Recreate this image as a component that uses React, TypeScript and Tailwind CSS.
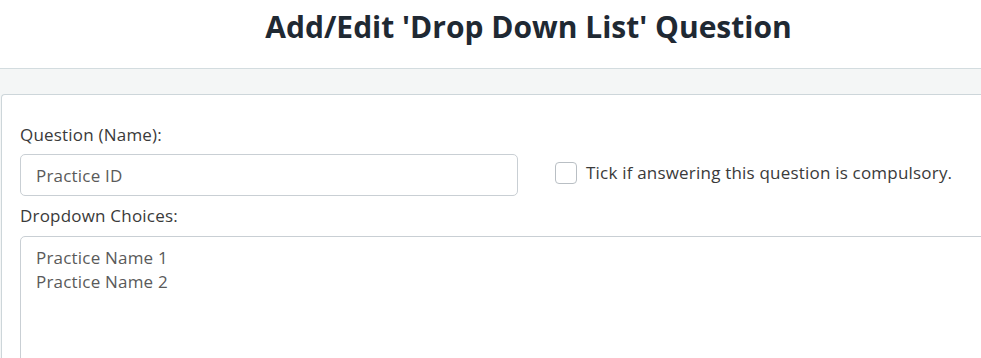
export default function App() {
  return (
    <div className="h-[358px] w-[981px] overflow-hidden bg-white font-['Open_Sans',sans-serif]">
      <header className="flex h-[68px] justify-center pt-[6px] pl-[76px]">
        <h1 className="text-[30px] leading-[42px] font-bold text-[#1f2933]">
          Add/Edit 'Drop Down List' Question
        </h1>
      </header>
      <div className="border-t border-[#d3dcdf] bg-[#f4f6f6] pt-[25px] pl-px">
        <div className="rounded-tl-[4px] border-t border-l border-[#cdd6da] bg-white pt-[29px] pl-[18px] text-[17px] tracking-[0.2px]">
          <label className="block leading-[22px] text-[#3a3a3a]">Question (Name):</label>
          <div className="mt-[8px] flex items-start">
            <input
              readOnly
              value="Practice ID"
              className="h-[42px] w-[498px] rounded-[5px] border border-[#c9cfd4] px-[15px] text-[#5a5a5a] outline-none"
            />
            <label className="ml-[37px] flex items-center gap-[9px] pt-[6px] text-[#3a3a3a]">
              <span className="h-[22px] w-[22px] rounded-[4px] border border-[#b9bfc4] bg-white" />
              Tick if answering this question is compulsory.
            </label>
          </div>
          <label className="mt-[9px] block leading-[22px] text-[#3a3a3a]">Dropdown Choices:</label>
          <textarea
            readOnly
            value={"Practice Name 1\nPractice Name 2"}
            className="mt-[9px] block h-[160px] w-[980px] resize-none rounded-tl-[5px] border border-[#c9cfd4] px-[15px] pt-[9px] leading-[24px] text-[#5a5a5a] outline-none"
          />
        </div>
      </div>
    </div>
  );
}
